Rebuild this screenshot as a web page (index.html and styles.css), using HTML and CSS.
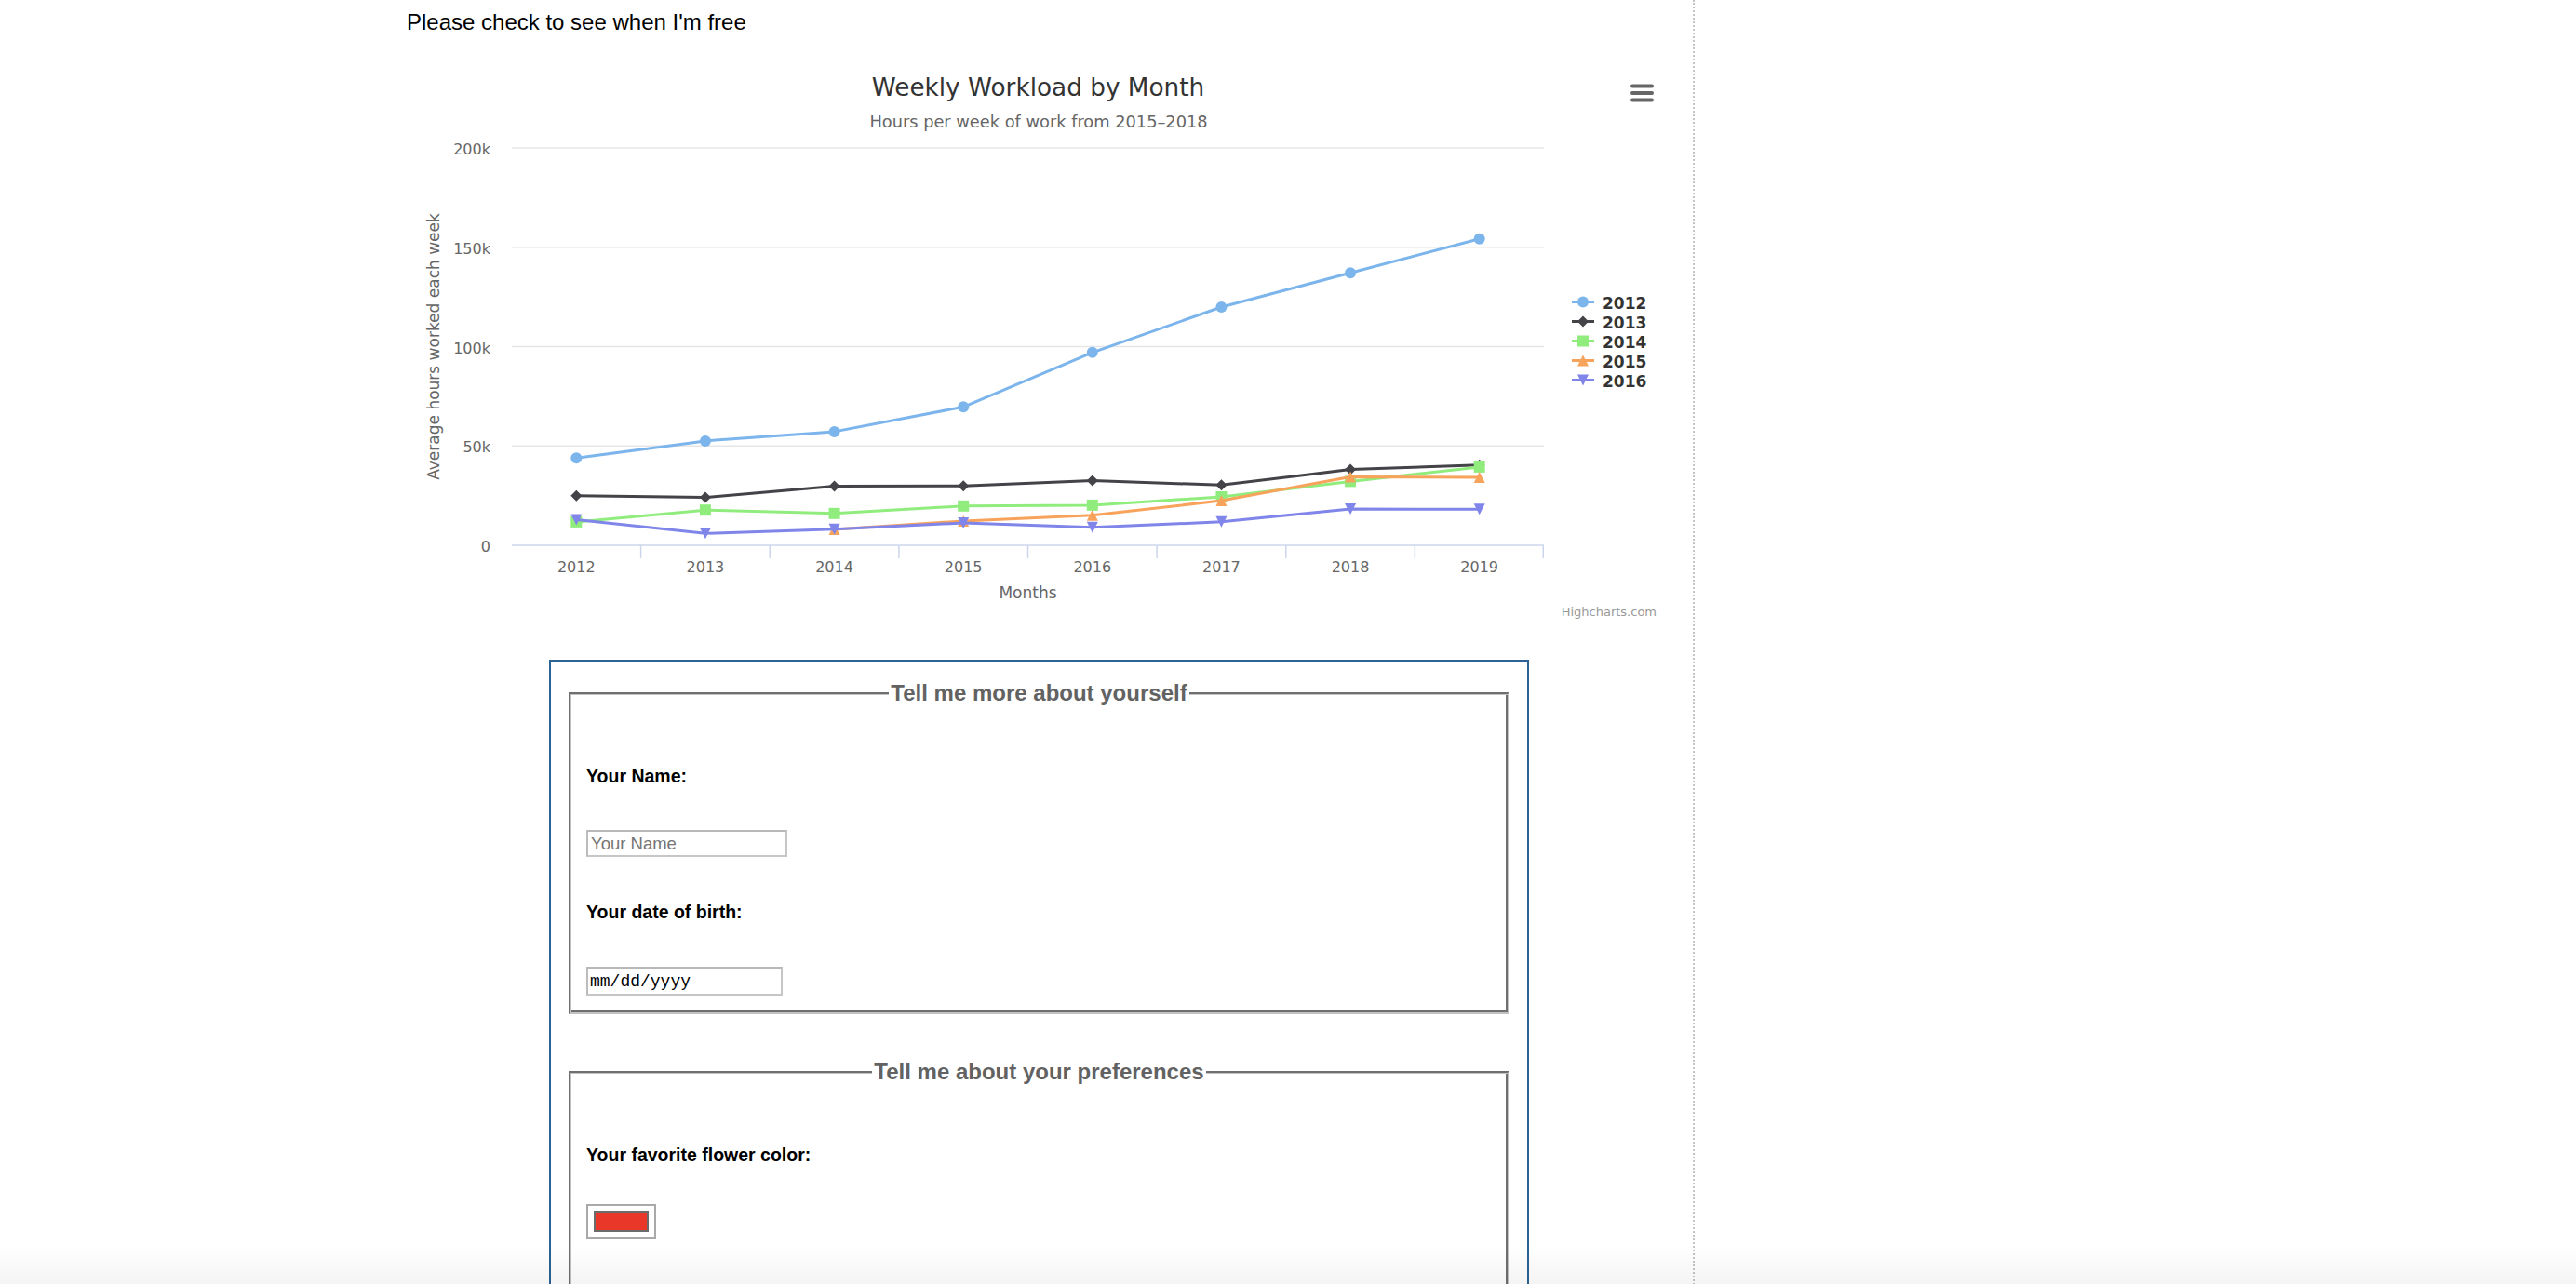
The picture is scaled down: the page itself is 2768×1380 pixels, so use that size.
FILE: index.html
```html
<!DOCTYPE html>
<html lang="en">
<head>
<meta charset="utf-8">
<title>Weekly Workload</title>
<link rel="stylesheet" href="styles.css">
</head>
<body>
<div class="main">
  <p class="intro">Please check to see when I'm free</p>

  <svg class="chart" width="1358" height="600" viewBox="437 68 1358 600" xmlns="http://www.w3.org/2000/svg">
    <defs>
      <circle id="m1" cx="0" cy="0" r="6"/>
      <path id="m2" d="M0,-6 L6,0 L0,6 L-6,0 Z"/>
      <path id="m3" d="M-6,-6 H6 V6 H-6 Z"/>
      <path id="m4" d="M0,-6 L6,6 L-6,6 Z"/>
      <path id="m5" d="M-6,-6 L6,-6 L0,6 Z"/>
    </defs>

    <text class="c-title" x="1115.5" y="103" text-anchor="middle">Weekly Workload by Month</text>
    <text class="c-sub" x="1116" y="137" text-anchor="middle">Hours per week of work from 2015–2018</text>

    <g class="grid">
      <line x1="550" y1="159" x2="1659" y2="159"/>
      <line x1="550" y1="265.75" x2="1659" y2="265.75"/>
      <line x1="550" y1="372.5" x2="1659" y2="372.5"/>
      <line x1="550" y1="479.25" x2="1659" y2="479.25"/>
    </g>
    <g class="axis">
      <line x1="550" y1="586" x2="1659" y2="586"/>
      <line x1="688.6" y1="586" x2="688.6" y2="600"/>
      <line x1="827.25" y1="586" x2="827.25" y2="600"/>
      <line x1="965.9" y1="586" x2="965.9" y2="600"/>
      <line x1="1104.5" y1="586" x2="1104.5" y2="600"/>
      <line x1="1243.1" y1="586" x2="1243.1" y2="600"/>
      <line x1="1381.75" y1="586" x2="1381.75" y2="600"/>
      <line x1="1520.4" y1="586" x2="1520.4" y2="600"/>
      <line x1="1658.25" y1="586" x2="1658.25" y2="600"/>
    </g>

    <g class="ylab" text-anchor="end">
      <text x="527" y="166">200k</text>
      <text x="527" y="272.75">150k</text>
      <text x="527" y="379.5">100k</text>
      <text x="527" y="486.25">50k</text>
      <text x="527" y="593">0</text>
    </g>
    <text class="ax-title" transform="translate(472,372.5) rotate(-90)" text-anchor="middle">Average hours worked each week</text>

    <g class="xlab" text-anchor="middle">
      <text x="619.31" y="615">2012</text>
      <text x="757.94" y="615">2013</text>
      <text x="896.56" y="615">2014</text>
      <text x="1035.19" y="615">2015</text>
      <text x="1173.81" y="615">2016</text>
      <text x="1312.44" y="615">2017</text>
      <text x="1451.06" y="615">2018</text>
      <text x="1589.69" y="615">2019</text>
    </g>
    <text class="ax-title" x="1104.5" y="643" text-anchor="middle">Months</text>

    <g class="series" stroke="#7cb5ec" fill="#7cb5ec">
      <path class="line" d="M619.31,492.2 L757.94,473.9 L896.56,463.9 L1035.19,437.3 L1173.81,378.8 L1312.44,330.0 L1451.06,293.2 L1589.69,256.8"/>
      <g stroke="none">
        <use href="#m1" x="619.31" y="492.2"/><use href="#m1" x="757.94" y="473.9"/><use href="#m1" x="896.56" y="463.9"/><use href="#m1" x="1035.19" y="437.3"/><use href="#m1" x="1173.81" y="378.8"/><use href="#m1" x="1312.44" y="330.0"/><use href="#m1" x="1451.06" y="293.2"/><use href="#m1" x="1589.69" y="256.8"/>
      </g>
    </g>
    <g class="series" stroke="#434348" fill="#434348">
      <path class="line" d="M619.31,532.8 L757.94,534.6 L896.56,522.5 L1035.19,522.3 L1173.81,516.6 L1312.44,521.3 L1451.06,504.6 L1589.69,499.7"/>
      <g stroke="none">
        <use href="#m2" x="619.31" y="532.8"/><use href="#m2" x="757.94" y="534.6"/><use href="#m2" x="896.56" y="522.5"/><use href="#m2" x="1035.19" y="522.3"/><use href="#m2" x="1173.81" y="516.6"/><use href="#m2" x="1312.44" y="521.3"/><use href="#m2" x="1451.06" y="504.6"/><use href="#m2" x="1589.69" y="499.7"/>
      </g>
    </g>
    <g class="series" stroke="#90ed7d" fill="#90ed7d">
      <path class="line" d="M619.31,560.9 L757.94,548.2 L896.56,551.8 L1035.19,543.8 L1173.81,542.9 L1312.44,534.0 L1451.06,517.4 L1589.69,501.9"/>
      <g stroke="none">
        <use href="#m3" x="619.31" y="560.9"/><use href="#m3" x="757.94" y="548.2"/><use href="#m3" x="896.56" y="551.8"/><use href="#m3" x="1035.19" y="543.8"/><use href="#m3" x="1173.81" y="542.9"/><use href="#m3" x="1312.44" y="534.0"/><use href="#m3" x="1451.06" y="517.4"/><use href="#m3" x="1589.69" y="501.9"/>
      </g>
    </g>
    <g class="series" stroke="#f7a35c" fill="#f7a35c">
      <path class="line" d="M896.56,569.0 L1035.19,560.0 L1173.81,553.7 L1312.44,538.1 L1451.06,512.6 L1589.69,512.9"/>
      <g stroke="none">
        <use href="#m4" x="896.56" y="569.0"/><use href="#m4" x="1035.19" y="560.0"/><use href="#m4" x="1173.81" y="553.7"/><use href="#m4" x="1312.44" y="538.1"/><use href="#m4" x="1451.06" y="512.6"/><use href="#m4" x="1589.69" y="512.9"/>
      </g>
    </g>
    <g class="series" stroke="#8085e9" fill="#8085e9">
      <path class="line" d="M619.31,558.4 L757.94,573.3 L896.56,568.7 L1035.19,562.0 L1173.81,566.8 L1312.44,560.8 L1451.06,547.0 L1589.69,547.3"/>
      <g stroke="none">
        <use href="#m5" x="619.31" y="558.4"/><use href="#m5" x="757.94" y="573.3"/><use href="#m5" x="896.56" y="568.7"/><use href="#m5" x="1035.19" y="562.0"/><use href="#m5" x="1173.81" y="566.8"/><use href="#m5" x="1312.44" y="560.8"/><use href="#m5" x="1451.06" y="547.0"/><use href="#m5" x="1589.69" y="547.3"/>
      </g>
    </g>

    <g class="legend">
      <g stroke="#7cb5ec" fill="#7cb5ec">
        <line class="lg-line" x1="1689" y1="324.5" x2="1713" y2="324.5"/>
        <use href="#m1" x="1701" y="324.5" stroke="none"/>
      </g>
      <text x="1722" y="331.5">2012</text>
      <g stroke="#434348" fill="#434348">
        <line class="lg-line" x1="1689" y1="345.5" x2="1713" y2="345.5"/>
        <use href="#m2" x="1701" y="345.5" stroke="none"/>
      </g>
      <text x="1722" y="352.5">2013</text>
      <g stroke="#90ed7d" fill="#90ed7d">
        <line class="lg-line" x1="1689" y1="366.5" x2="1713" y2="366.5"/>
        <use href="#m3" x="1701" y="366.5" stroke="none"/>
      </g>
      <text x="1722" y="373.5">2014</text>
      <g stroke="#f7a35c" fill="#f7a35c">
        <line class="lg-line" x1="1689" y1="387.5" x2="1713" y2="387.5"/>
        <use href="#m4" x="1701" y="387.5" stroke="none"/>
      </g>
      <text x="1722" y="394.5">2015</text>
      <g stroke="#8085e9" fill="#8085e9">
        <line class="lg-line" x1="1689" y1="408.5" x2="1713" y2="408.5"/>
        <use href="#m5" x="1701" y="408.5" stroke="none"/>
      </g>
      <text x="1722" y="415.5">2016</text>
    </g>

    <g class="menu">
      <line x1="1754" y1="92.5" x2="1775" y2="92.5"/>
      <line x1="1754" y1="100" x2="1775" y2="100"/>
      <line x1="1754" y1="107.5" x2="1775" y2="107.5"/>
    </g>

    <text class="credits" x="1780" y="661.5" text-anchor="end">Highcharts.com</text>
  </svg>

  <form class="form-box">
    <fieldset class="group">
      <legend class="group-title">Tell me more about yourself</legend>
      <div class="lbl lbl-first">Your Name:</div>
      <input class="txt" type="text" placeholder="Your Name">
      <div class="lbl lbl-next">Your date of birth:</div>
      <input class="date" type="text" placeholder="mm/dd/yyyy">
    </fieldset>

    <fieldset class="group group-second">
      <legend class="group-title">Tell me about your preferences</legend>
      <div class="lbl lbl-first">Your favorite flower color:</div>
      <span class="color-input"><span class="swatch"></span></span>
    </fieldset>
  </form>
</div>
<div class="fade"></div>
</body>
</html>
```

FILE: styles.css
```css
html, body {
  margin: 0;
  padding: 0;
  background: #ffffff;
}

body {
  font-family: "Liberation Sans", Arial, sans-serif;
  color: #000;
}

.main {
  margin-left: 437px;
  width: 1382px;
  min-height: 1500px;
  border-right: 2px dotted #c4c4c4;
}

.intro {
  margin: 0;
  padding-top: 10px;
  font-size: 24px;
  line-height: 28px;
}

.chart {
  display: block;
  margin-top: 30px;
  font-family: "DejaVu Sans", "Lucida Grande", sans-serif;
}

.c-title {
  font-size: 26.3px;
  fill: #333333;
}

.c-sub {
  font-size: 17.8px;
  fill: #666666;
}

.grid line {
  stroke: #e6e6e6;
  stroke-width: 1.5;
}

.axis line {
  stroke: #ccd6eb;
  stroke-width: 1.5;
}

.ylab text,
.xlab text {
  font-size: 16px;
  fill: #666666;
}

.ax-title {
  font-size: 17px;
  fill: #666666;
}

.series .line {
  fill: none;
  stroke-width: 3;
  stroke-linejoin: round;
  stroke-linecap: round;
}

.lg-line {
  stroke-width: 3;
}

.legend text {
  font-size: 17px;
  font-weight: bold;
  fill: #333333;
}

.menu line {
  stroke: #666666;
  stroke-width: 4;
  stroke-linecap: round;
}

.credits {
  font-size: 13px;
  fill: #999999;
}

.form-box {
  box-sizing: border-box;
  width: 1053px;
  margin: 41px 0 0 153px;
  border: 2px solid #2b6394;
  padding: 20px 19px 0 19px;
}

.group {
  margin: 0;
  min-width: 0;
  padding: 0 17px 18px 17px;
  border-style: solid;
  border-width: 2px;
  border-color: #6f6f6f #c2c2c2 #c2c2c2 #6f6f6f;
  box-shadow: inset 1px 1px 0 #c2c2c2, inset -2px -2px 0 #6f6f6f;
}

.group-second {
  margin-top: 48px;
  padding-bottom: 120px;
}

.group-title {
  margin-left: auto;
  margin-right: auto;
  padding: 0 2px;
  background: #ffffff;
  font-size: 24px;
  line-height: 27px;
  font-weight: bold;
  color: #626262;
}

.lbl {
  font-size: 19.5px;
  line-height: 24px;
  font-weight: bold;
}

.lbl-first {
  margin-top: 64px;
}

.lbl-next {
  margin-top: 47px;
}

.txt {
  display: block;
  box-sizing: border-box;
  width: 216px;
  height: 29px;
  margin: 46px 0 0 0;
  padding: 0 3px;
  border: 2px solid #c6c6c6;
  border-top-color: #b8b8b8;
  border-left-color: #bcbcbc;
  font-family: "Liberation Sans", Arial, sans-serif;
  font-size: 18.5px;
  outline: none;
}

.txt::placeholder {
  color: #757575;
}

.date {
  display: block;
  box-sizing: border-box;
  width: 211px;
  height: 31px;
  margin: 47px 0 0 0;
  padding: 0 2px;
  border: 2px solid #c6c6c6;
  border-top-color: #b8b8b8;
  border-left-color: #bcbcbc;
  font-family: "Liberation Mono", "Courier New", monospace;
  font-size: 18px;
  outline: none;
}

.date::placeholder {
  color: #000000;
}

.color-input {
  display: block;
  box-sizing: border-box;
  width: 75px;
  height: 38px;
  margin-top: 41px;
  padding: 6px;
  border: 2px solid #a9a9a9;
  background: #ffffff;
}

.swatch {
  display: block;
  box-sizing: border-box;
  width: 100%;
  height: 100%;
  border: 2px solid #6b6b6b;
  background: #e9372a;
}

.fade {
  position: fixed;
  left: 0;
  right: 0;
  bottom: 0;
  height: 42px;
  pointer-events: none;
  background: linear-gradient(rgba(0, 0, 0, 0), rgba(0, 0, 0, 0.045));
}
```
